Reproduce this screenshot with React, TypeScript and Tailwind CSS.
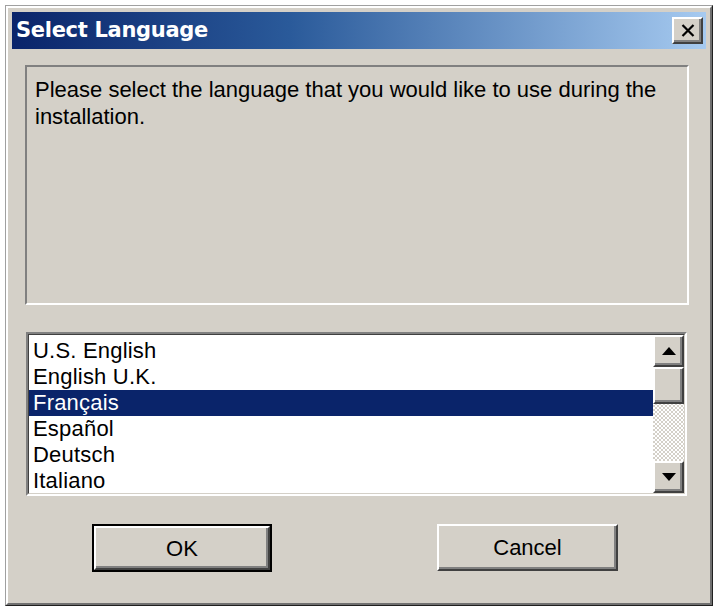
import { useState } from "react";

const languages = ["U.S. English", "English U.K.", "Français", "Español", "Deutsch", "Italiano"];

const raised =
  "border-t-[2px] border-l-[2px] border-r-[2px] border-b-[2px] border-t-white border-l-white border-r-[#404040] border-b-[#404040]";

const ArrowUp = () => (
  <svg width="14" height="8" viewBox="0 0 14 8">
    <polygon points="7,0 14,8 0,8" fill="#000" />
  </svg>
);

const ArrowDown = () => (
  <svg width="14" height="8" viewBox="0 0 14 8">
    <polygon points="0,0 14,0 7,8" fill="#000" />
  </svg>
);

const ScrollButton = ({ children, className = "" }: { children?: React.ReactNode; className?: string }) => (
  <div className={`${raised} bg-[#d4d0c8] ${className}`}>
    <div className="w-full h-full flex items-center justify-center shadow-[inset_-2px_-2px_0_#808080]">
      {children}
    </div>
  </div>
);

export default function App() {
  const [selected, setSelected] = useState(2);

  return (
    <div
      className="w-[720px] h-[612px] bg-white pl-[5px] pt-[5px]"
      style={{ fontFamily: "'Liberation Sans', Arial, sans-serif" }}
    >
      {/* window frame */}
      <div className="w-[708px] h-[601px] border border-t-[#a0a0a0] border-l-[#a0a0a0] border-r-[#202020] border-b-[#202020]">
        <div className="w-full h-full border-2 border-t-white border-l-white border-r-[#707070] border-b-[#707070] bg-[#d4d0c8] p-[4px] flex flex-col">
          {/* title bar */}
          <div className="h-[37px] shrink-0 flex items-center justify-between pl-[4px] pr-[3px] bg-[linear-gradient(to_right,#0a246a_0%,#2a5a9a_40%,#a6caf0_100%)]">
            <span
              className="text-white font-bold text-[21px] tracking-[-0.3px]"
              style={{ fontFamily: "'DejaVu Sans', Verdana, sans-serif" }}
            >
              Select Language
            </span>
            <div className={`${raised} w-[31px] h-[27px] bg-[#d4d0c8]`}>
              <div className="w-full h-full flex items-center justify-center shadow-[inset_-2px_-2px_0_#808080]">
                <svg width="14" height="13" viewBox="0 0 14 13">
                  <path d="M1.5 1 L12.5 12 M12.5 1 L1.5 12" stroke="#000" strokeWidth="2.2" />
                </svg>
              </div>
            </div>
          </div>

          {/* message group */}
          <div className="mt-[16px] ml-[13px] mr-[17px] h-[240px] border-2 border-t-[#808080] border-l-[#808080] border-r-white border-b-white px-[8px] pt-[9px]">
            <p className="text-[22px] leading-[27px] text-black">
              Please select the language that you would like to use during the installation.
            </p>
          </div>

          {/* list box */}
          <div className="mt-[27px] ml-[14px] mr-[19px] h-[164px] border-2 border-t-[#808080] border-l-[#808080] border-r-white border-b-white">
            <div className="w-full h-full border border-t-[#404040] border-l-[#404040] border-r-[#d4d0c8] border-b-[#d4d0c8] bg-white flex">
              <div className="flex-1 pt-[3px] overflow-hidden">
                {languages.map((l, i) => (
                  <div
                    key={l}
                    onClick={() => setSelected(i)}
                    className={`h-[26px] leading-[26px] pl-[4px] text-[22px] tracking-[0.2px] ${
                      i === selected ? "bg-[#0a246a] text-white" : "text-black"
                    }`}
                  >
                    {l}
                  </div>
                ))}
              </div>
              <div className="w-[31px] flex flex-col bg-[repeating-conic-gradient(#d4d0c8_0%_25%,#ffffff_0%_50%)] bg-[length:4px_4px]">
                <ScrollButton className="h-[32px]">
                  <ArrowUp />
                </ScrollButton>
                <ScrollButton className="h-[37px]" />
                <div className="flex-1" />
                <ScrollButton className="h-[32px]">
                  <ArrowDown />
                </ScrollButton>
              </div>
            </div>
          </div>

          {/* buttons */}
          <div className="mt-[28px] flex pl-[80px] gap-[165px]">
            <div className="w-[180px] h-[48px] border-2 border-black">
              <div className={`${raised} w-full h-full bg-[#d4d0c8]`}>
                <div className="w-full h-full flex items-center justify-center text-[22px] text-black shadow-[inset_-2px_-2px_0_#808080]">
                  OK
                </div>
              </div>
            </div>
            <div className={`${raised} w-[181px] h-[47px] bg-[#d4d0c8]`}>
              <div className="w-full h-full flex items-center justify-center text-[22px] text-black shadow-[inset_-2px_-2px_0_#808080]">
                Cancel
              </div>
            </div>
          </div>
        </div>
      </div>
    </div>
  );
}
